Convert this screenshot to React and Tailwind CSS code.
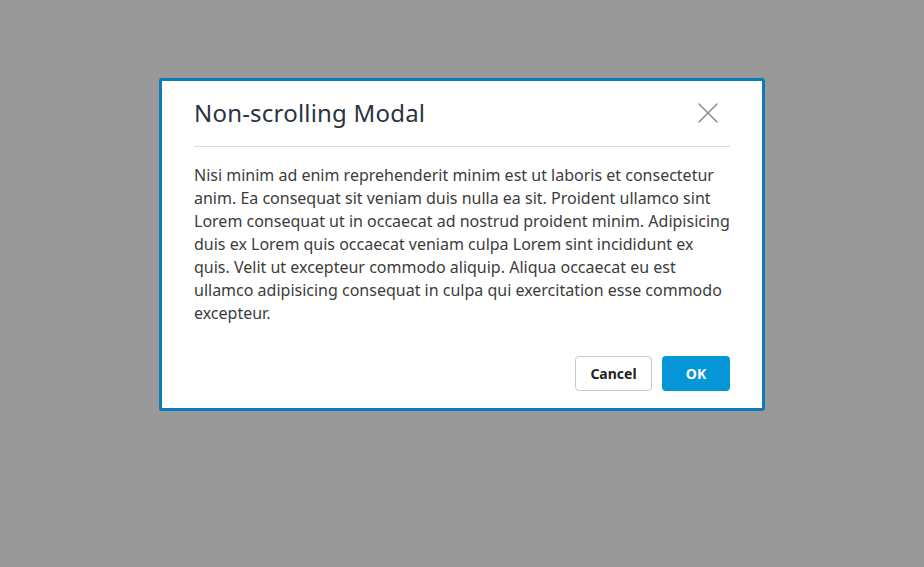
export default function App() {
  return (
    <div className="w-[924px] h-[567px] bg-[#999999] relative" style={{ fontFamily: '"Noto Sans", sans-serif' }}>
      <div className="absolute left-[159px] top-[78px] w-[606px] bg-white border-[3px] border-[#0a7ab8] rounded-[3px] px-[32px] pb-[17px]">
        <div className="flex items-center justify-between pt-[16px] pb-[17px] border-b border-[#d8dbe0]">
          <h1 className="text-[24px] leading-[32px] tracking-[0.2px] text-[#2a3440] font-normal">Non-scrolling Modal</h1>
          <button className="w-8 h-8 flex items-center justify-center mr-[6px]">
            <svg width="20" height="20" viewBox="0 0 20 20" fill="none" stroke="#8a9097" strokeWidth="1.6" strokeLinecap="round">
              <path d="M1 1 L19 19 M19 1 L1 19" />
            </svg>
          </button>
        </div>
        <p className="pt-[17px] text-[16px] leading-[23px] text-[#3c3c3c]">
          Nisi minim ad enim reprehenderit minim est ut laboris et consectetur anim. Ea consequat sit veniam duis nulla ea sit. Proident ullamco sint Lorem consequat ut in occaecat ad nostrud proident minim. Adipisicing duis ex Lorem quis occaecat veniam culpa Lorem sint incididunt ex quis. Velit ut excepteur commodo aliquip. Aliqua occaecat eu est ullamco adipisicing consequat in culpa qui exercitation esse commodo excepteur.
        </p>
        <div className="flex justify-end gap-[10px] mt-[31px]">
          <button className="w-[77px] h-[35px] rounded-[4px] border border-[#c6cacf] bg-white text-[14px] font-bold text-[#222]">Cancel</button>
          <button className="w-[68px] h-[35px] rounded-[4px] bg-[#0696d7] text-[14px] font-bold text-white">OK</button>
        </div>
      </div>
    </div>
  );
}
